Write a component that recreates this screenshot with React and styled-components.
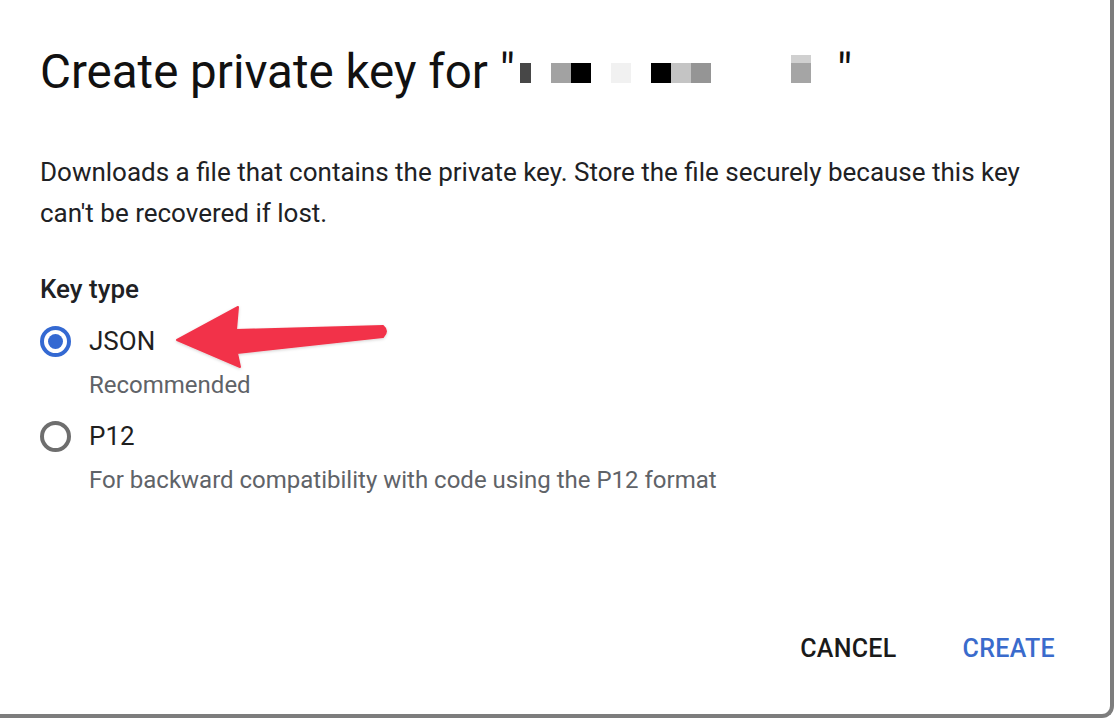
import React from "react";
import styled, { createGlobalStyle } from "styled-components";

const GlobalStyle = createGlobalStyle`
  html, body {
    margin: 0;
    padding: 0;
    background: #ffffff;
  }
  body {
    font-family: Roboto, "Liberation Sans", Arial, sans-serif;
    color: #202124;
  }
`;

const Dialog = styled.div`
  position: relative;
  box-sizing: border-box;
  width: 1114px;
  height: 718px;
  display: flex;
  flex-direction: column;
  padding: 44px 0 38px 40px;
  background: #ffffff;
  border-right: 4px solid #7d7d7d;
  border-bottom: 4px solid #7d7d7d;
  border-bottom-right-radius: 12px;
  overflow: hidden;
`;

const Title = styled.h1`
  margin: 0;
  font-size: 47.5px;
  line-height: 56px;
  font-weight: 400;
  color: #111111;
  white-space: nowrap;
`;

const Redaction = styled.span`
  display: inline-flex;
  align-items: flex-end;
  width: 322px;
  height: 28px;
  vertical-align: 5px;
`;

const Cell = styled.span`
  display: block;
  flex: none;
  width: ${(p) => p.$w || 20}px;
  height: ${(p) => p.$h || 20}px;
  background: ${(p) => p.$c || "transparent"};
`;

const Description = styled.p`
  margin: 52px 0 0;
  max-width: 1010px;
  font-size: 26px;
  line-height: 41px;
  color: #202124;
`;

const SectionLabel = styled.div`
  margin-top: 39px;
  font-size: 26px;
  line-height: 32px;
  font-weight: 500;
  color: #202124;
`;

const Option = styled.label`
  display: flex;
  align-items: center;
  gap: 18px;
  margin-top: ${(p) => p.$mt}px;
  height: 40px;
  font-size: 26px;
  color: #1f1f1f;
  cursor: pointer;
`;

const Radio = styled.span`
  box-sizing: border-box;
  width: 31px;
  height: 31px;
  border-radius: 50%;
  border: 4px solid ${(p) => (p.$checked ? "#3469d2" : "#6e6e6e")};
  display: flex;
  align-items: center;
  justify-content: center;

  &::after {
    content: "";
    width: 15px;
    height: 15px;
    border-radius: 50%;
    background: ${(p) => (p.$checked ? "#3469d2" : "transparent")};
  }
`;

const Hint = styled.div`
  margin: 8px 0 0 49px;
  font-size: 24px;
  line-height: 32px;
  color: #5f6368;
`;

const Footer = styled.div`
  margin-top: auto;
  display: flex;
  justify-content: flex-end;
  gap: 34px;
  padding-right: 39px;
`;

const Button = styled.button`
  height: 56px;
  padding: 0 16px;
  border: none;
  background: transparent;
  font-family: Roboto, "Liberation Sans", Arial, sans-serif;
  font-size: 25px;
  font-weight: 500;
  letter-spacing: 0.3px;
  text-transform: uppercase;
  color: ${(p) => (p.$primary ? "#3a6bcc" : "#1a1a1a")};
  cursor: pointer;
`;

const Arrow = styled.svg`
  position: absolute;
  left: 0;
  top: 0;
  width: 420px;
  height: 400px;
  pointer-events: none;
  overflow: visible;
`;

const cells = [
  { w: 5 },
  { w: 11, c: "#474747" },
  { w: 20 },
  { c: "#a2a2a2" },
  { c: "#000000" },
  { c: "transparent" },
  { c: "#f1f1f1" },
  { c: "transparent" },
  { c: "#000000" },
  { c: "#c4c4c4" },
  { c: "#959595" },
  { c: "transparent" },
  { c: "transparent" },
  { c: "transparent" },
  { c: "transparent" },
  { h: 28, c: "linear-gradient(#d0d0d0 0 8px, #a5a5a5 8px)" },
];

export default function App() {
  return (
    <>
      <GlobalStyle />
      <Dialog>
        <Title>
          Create private key for "
          <Redaction>
            {cells.map((cell, i) => (
              <Cell key={i} $w={cell.w} $h={cell.h} $c={cell.c} />
            ))}
          </Redaction>
          "
        </Title>

        <Description>
          Downloads a file that contains the private key. Store the file
          securely because this key can't be recovered if lost.
        </Description>

        <SectionLabel>Key type</SectionLabel>

        <Option $mt={16}>
          <Radio $checked />
          JSON
        </Option>
        <Hint>Recommended</Hint>

        <Option $mt={15}>
          <Radio />
          P12
        </Option>
        <Hint>For backward compatibility with code using the P12 format</Hint>

        <Footer>
          <Button>Cancel</Button>
          <Button $primary>Create</Button>
        </Footer>

        <Arrow viewBox="0 0 420 400">
          <defs>
            <filter id="arrowShadow" x="-10%" y="-30%" width="120%" height="160%">
              <feDropShadow dx="0" dy="1" stdDeviation="1.5" floodColor="#000" floodOpacity="0.18" />
            </filter>
          </defs>
          <path
            d="M177 340 L238 307 L236 330 L383 326 Q389 331 383 337 L237 353 L240 367 Z"
            fill="#f23349"
            stroke="#f23349"
            strokeWidth="2"
            strokeLinejoin="round"
            filter="url(#arrowShadow)"
          />
        </Arrow>
      </Dialog>
    </>
  );
}
